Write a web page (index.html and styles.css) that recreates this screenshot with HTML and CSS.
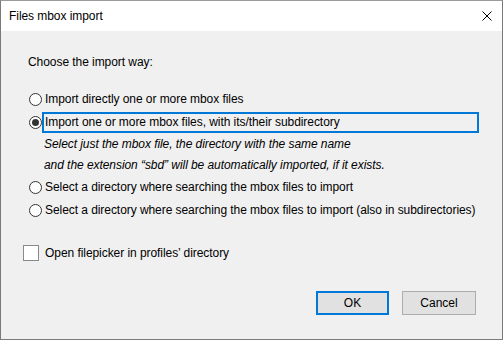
FILE: index.html
```html
<!DOCTYPE html>
<html>
<head>
<meta charset="utf-8">
<link rel="stylesheet" href="styles.css">
</head>
<body>
<div class="window">
  <div class="titlebar">
    <span class="title">Files mbox import</span>
    <svg class="close" width="10" height="10" viewBox="0 0 10 10"><path d="M0.5 0.5 L9.5 9.5 M9.5 0.5 L0.5 9.5" stroke="#000" stroke-width="1" fill="none"/></svg>
  </div>
  <div class="content">
    <div class="prompt">Choose the import way:</div>
    <div class="options">
      <div class="row"><span class="radio"></span><span class="label">Import directly one or more mbox files</span></div>
      <div class="row"><span class="radio checked"></span><span class="label focused">Import one or more mbox files, with its/their subdirectory</span></div>
      <div class="note">Select just the mbox file, the directory with the same name</div>
      <div class="note">and the extension “sbd” will be automatically imported, if it exists.</div>
      <div class="row"><span class="radio"></span><span class="label">Select a directory where searching the mbox files to import</span></div>
      <div class="row"><span class="radio"></span><span class="label">Select a directory where searching the mbox files to import (also in subdirectories)</span></div>
    </div>
    <div class="check-row"><span class="checkbox"></span><span class="check-label">Open filepicker in profiles’ directory</span></div>
    <div class="buttons">
      <button class="btn default">OK</button>
      <button class="btn">Cancel</button>
    </div>
  </div>
</div>
</body>
</html>
```
FILE: styles.css
```css
html, body {
  margin: 0;
  padding: 0;
}
body {
  font-family: "Liberation Sans", Arial, sans-serif;
  font-size: 12px;
  letter-spacing: -0.06px;
  color: #000;
  background: #f0f0f0;
}
.window {
  width: 503px;
  height: 340px;
  box-sizing: border-box;
  border: 1px solid #7a7a7a;
  border-top-color: #9a9a9a;
  display: flex;
  flex-direction: column;
  background: #f0f0f0;
}
.titlebar {
  height: 30px;
  background: #fff;
  display: flex;
  align-items: center;
  justify-content: space-between;
  padding: 0 10px 0 8px;
  flex-shrink: 0;
}
.title {
  font-size: 12px;
  line-height: 16px;
}
.close {
  display: block;
}
.content {
  flex: 1;
  display: flex;
  flex-direction: column;
  padding: 23px 23px 0 27px;
}
.prompt {
  line-height: 16px;
}
.options {
  margin-top: 18px;
  display: flex;
  flex-direction: column;
}
.row {
  height: 23px;
  display: flex;
  align-items: center;
  padding-left: 1px;
}
.radio {
  width: 13px;
  height: 13px;
  box-sizing: border-box;
  border: 1px solid #333;
  border-radius: 50%;
  background: #fff;
  display: flex;
  align-items: center;
  justify-content: center;
  flex-shrink: 0;
}
.radio.checked::after {
  content: "";
  width: 7px;
  height: 7px;
  border-radius: 50%;
  background: #333;
}
.label {
  border: 2px solid transparent;
  padding: 0 1px;
  line-height: 17px;
  white-space: nowrap;
}
.label.focused {
  flex: 1;
  border-color: #0078d7;
}
.note {
  height: 21px;
  line-height: 21px;
  padding-left: 16px;
  font-style: italic;
  white-space: nowrap;
}
.check-row {
  margin-top: 23px;
  display: flex;
  align-items: center;
  margin-left: -5px;
}
.checkbox {
  width: 16px;
  height: 16px;
  box-sizing: border-box;
  border: 1px solid #8a8a8a;
  background: #fff;
  flex-shrink: 0;
}
.check-label {
  margin-left: 6px;
  line-height: 16px;
}
.buttons {
  margin-top: 30px;
  display: flex;
  justify-content: flex-end;
  gap: 13px;
  padding-right: 3px;
}
.btn {
  width: 74px;
  height: 24px;
  box-sizing: border-box;
  background: #e1e1e1;
  border: 1px solid #adadad;
  font-family: "Liberation Sans", Arial, sans-serif;
  font-size: 12px;
  color: #000;
  padding: 0;
  margin: 0;
}
.btn.default {
  width: 73px;
  border: 2px solid #0078d7;
}
```
